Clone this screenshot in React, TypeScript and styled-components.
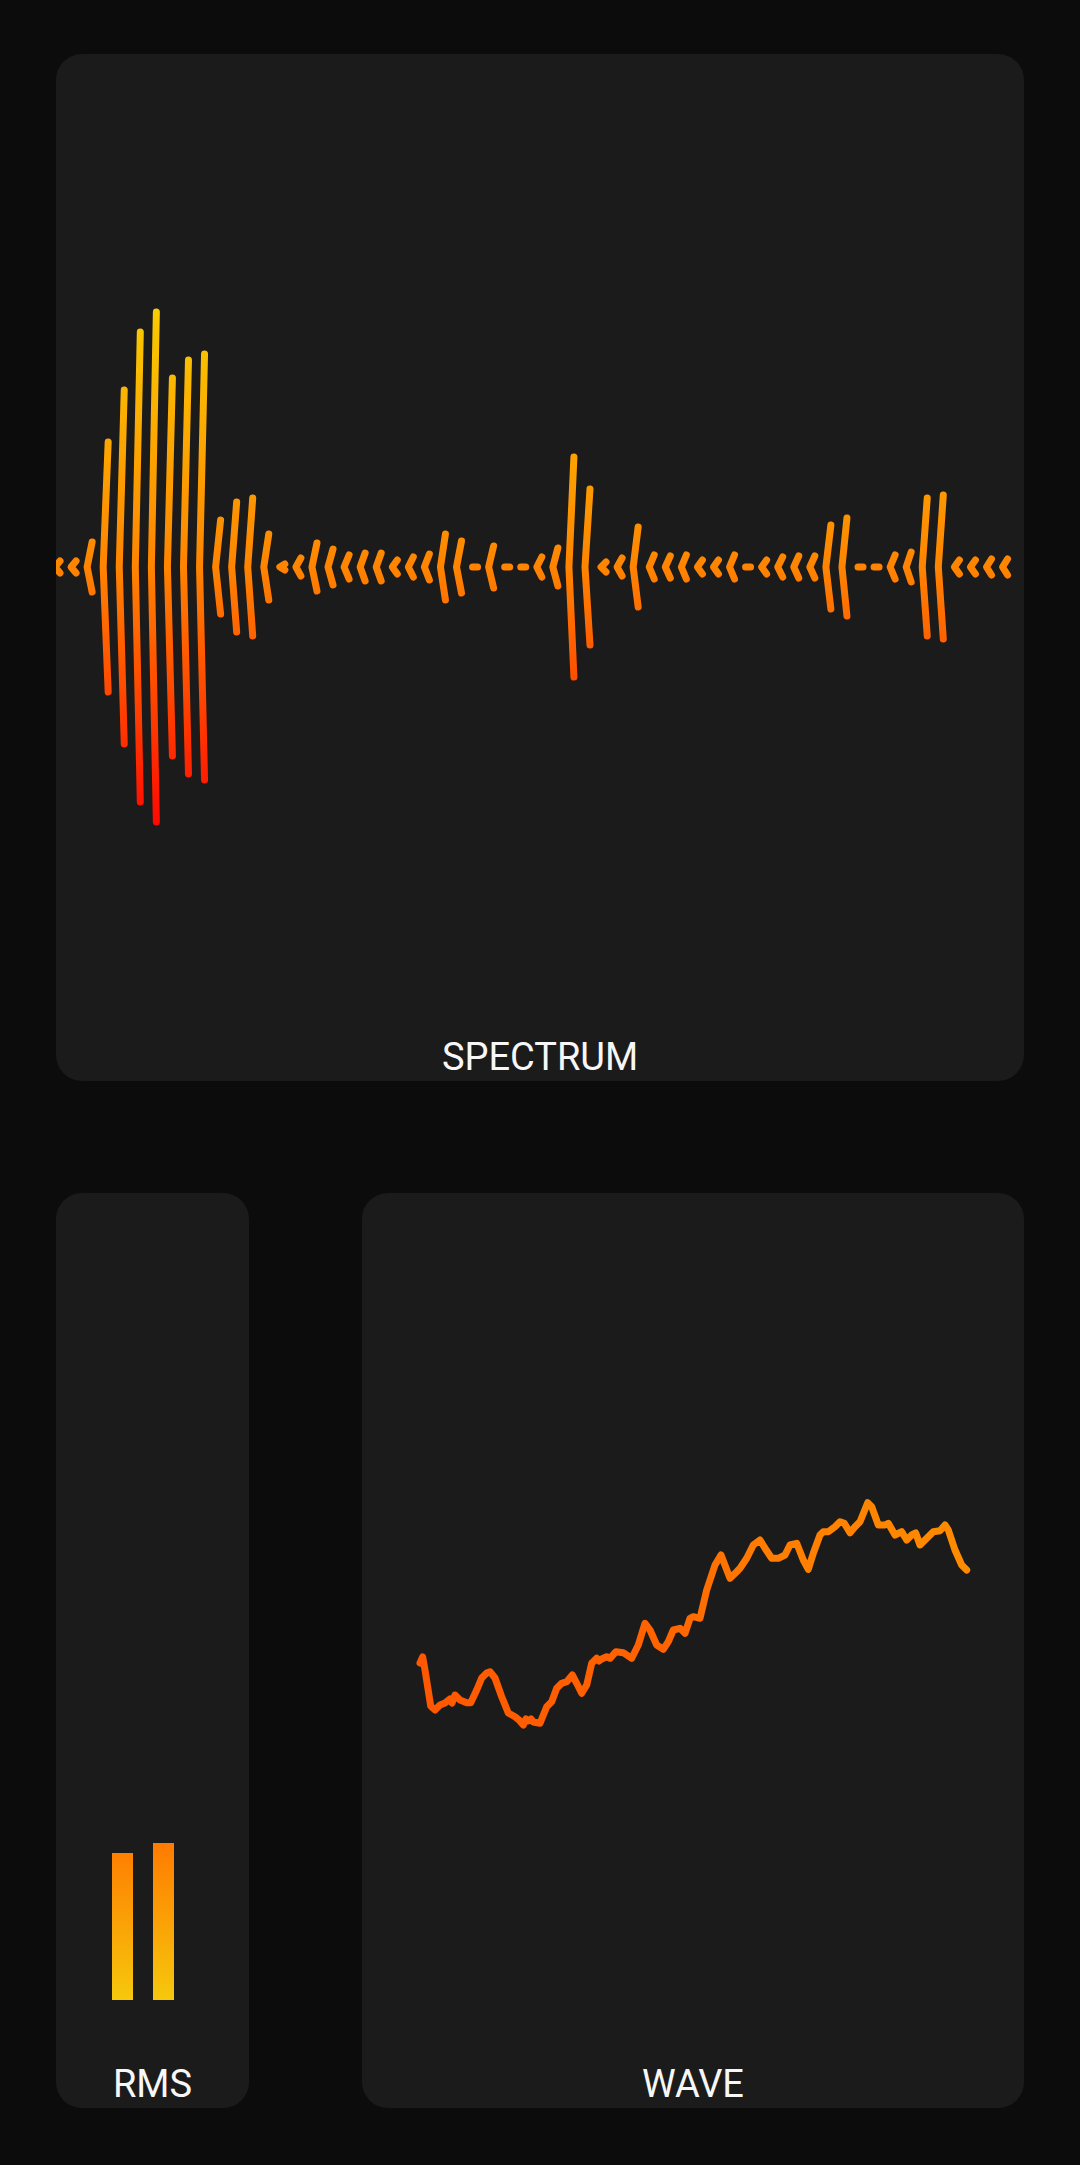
import styled, { createGlobalStyle } from "styled-components";

const GlobalStyle = createGlobalStyle`
  html, body {
    margin: 0;
    padding: 0;
    background: #0c0c0c;
  }
  body {
    font-family: "Roboto", "Liberation Sans", sans-serif;
  }
`;

const Page = styled.div`
  box-sizing: border-box;
  width: 1080px;
  height: 2165px;
  padding: 54px 56px 57px;
  display: flex;
  flex-direction: column;
  gap: 112px;
`;

const Panel = styled.section<{ $height: number }>`
  height: ${(p) => p.$height}px;
  background: #1b1b1b;
  border-radius: 26px;
  overflow: hidden;
  display: grid;
  grid-template: 1fr / 1fr;
`;

// chart and label share the one grid cell, label sits at the bottom
const Chart = styled.svg`
  grid-area: 1 / 1;
  display: block;
`;

const Label = styled.div`
  grid-area: 1 / 1;
  align-self: end;
  justify-self: center;
  padding-bottom: 2px;
  font-family: "Roboto", "Liberation Sans", sans-serif;
  font-size: 38px;
  line-height: 44px;
  color: #f7f7f7;
`;

const BottomRow = styled.div`
  display: grid;
  grid-template-columns: 193px 1fr;
  gap: 113px;
`;

const Meter = styled.div`
  grid-area: 1 / 1;
  display: flex;
  align-items: flex-end;
  gap: 20px;
  padding: 0 0 108px 56px;
`;

const MeterBar = styled.div<{ $h: number }>`
  width: 21px;
  height: ${(p) => p.$h}px;
  background: linear-gradient(to top, #f6c80c 0px, #ff7800 162px);
`;

const HEIGHTS = [
  6, 6, 25, 125, 177, 235, 255, 189, 207, 213,
  47, 65, 69, 33, 3, 9, 24, 18, 12, 14,
  14, 7, 10, 13, 33, 26, 0, 21, 0, 0,
  10, 19, 110, 78, 5, 9, 40, 12, 11, 12,
  7, 7, 12, 0, 7, 10, 11, 11, 42, 49,
  0, 0, 12, 15, 69, 72, 7, 7, 8, 8,
];

const CY = 567;

function Spectrum() {
  return (
    <Chart width={968} height={1027} viewBox="56 54 968 1027">
      <defs>
        <linearGradient id="spec" gradientUnits="userSpaceOnUse" x1="0" y1={CY - 258} x2="0" y2={CY + 258}>
          <stop offset="0" stopColor="#f8cc00" />
          <stop offset="0.5" stopColor="#ff8400" />
          <stop offset="1" stopColor="#ff0800" />
        </linearGradient>
      </defs>
      {HEIGHTS.map((h, i) => {
        const x = 60 + i * 16.06;
        return (
          <path
            key={i}
            d={`M${x} ${CY - h} L${x - 5} ${CY} L${x} ${CY + h}`}
            fill="none"
            stroke="url(#spec)"
            strokeWidth={7}
            strokeLinecap="round"
            strokeLinejoin="round"
          />
        );
      })}
    </Chart>
  );
}

const WAVE: [number, number][] = [
  [420, 1663], [422.7, 1657], [425, 1670], [430.7, 1706], [435, 1710], [440, 1705],
  [445, 1703], [450, 1699], [452, 1703], [455, 1695], [460, 1700], [466.7, 1702.7],
  [470.7, 1702.7], [476.7, 1690], [481.7, 1678], [486.7, 1673], [490, 1671.7], [495, 1678],
  [501.7, 1696.7], [508.3, 1713], [515, 1716.7], [519, 1720], [523.3, 1725], [526, 1719],
  [528.3, 1721], [531, 1719], [533.3, 1722], [540, 1723.3], [546.7, 1706.7], [551.7, 1701.7],
  [556.7, 1688.3], [561.7, 1683.3], [566.7, 1681.7], [572.3, 1675], [576.7, 1683.3],
  [581.7, 1693.3], [586.7, 1685], [591.7, 1663.3], [596.7, 1658.3], [599, 1661], [601.7, 1659],
  [606.7, 1656.7], [610, 1658.3], [616, 1651.7], [623.3, 1652.7], [631.7, 1658.3],
  [638.3, 1645], [645, 1623.3], [650, 1630], [656.7, 1645], [663.3, 1649.3], [668.3, 1641.7],
  [673.3, 1630], [680, 1628.3], [685, 1633.3], [690, 1618.3], [693.3, 1616.7], [700, 1618.3],
  [706.7, 1590], [715, 1565], [721, 1555], [730, 1578.3], [736.7, 1571.7], [740, 1568.3],
  [746.7, 1558.3], [753.3, 1545], [760, 1540], [765, 1548.3], [771.7, 1558.3], [778.3, 1558.3],
  [785, 1555], [790, 1545], [796.7, 1543.3], [803.3, 1560], [808.3, 1569.3], [813.3, 1553.3],
  [820, 1535], [823.3, 1531.7], [828.3, 1531.7], [835, 1526.7], [840, 1521.7], [844.3, 1523.3],
  [850, 1532.7], [855, 1526.7], [860, 1521.7], [867.7, 1502.7], [871.7, 1506.7], [878.3, 1525],
  [885, 1525], [888.3, 1523.3], [895, 1535], [901.7, 1531.7], [906.7, 1540], [911.7, 1535],
  [915.7, 1533], [920, 1545], [925, 1540], [933.3, 1531.7], [940, 1530.7], [945, 1525],
  [948.3, 1530], [955, 1550], [961.7, 1565], [966.7, 1570],
];

function Wave() {
  return (
    <Chart width={662} height={915} viewBox="362 1193 662 915">
      <defs>
        <linearGradient id="wave" gradientUnits="userSpaceOnUse" x1="418" y1="0" x2="968" y2="0">
          <stop offset="0" stopColor="#ff5800" />
          <stop offset="0.45" stopColor="#ff6400" />
          <stop offset="0.62" stopColor="#ff7c00" />
          <stop offset="1" stopColor="#ff8c00" />
        </linearGradient>
      </defs>
      <polyline
        points={WAVE.map(([x, y]) => `${x},${y}`).join(" ")}
        fill="none"
        stroke="url(#wave)"
        strokeWidth={7}
        strokeLinejoin="round"
        strokeLinecap="round"
      />
    </Chart>
  );
}

export default function App() {
  return (
    <>
      <GlobalStyle />
      <Page>
        <Panel $height={1027}>
          <Spectrum />
          <Label>SPECTRUM</Label>
        </Panel>
        <BottomRow>
          <Panel $height={915}>
            <Meter>
              <MeterBar $h={147} />
              <MeterBar $h={157} />
            </Meter>
            <Label>RMS</Label>
          </Panel>
          <Panel $height={915}>
            <Wave />
            <Label>WAVE</Label>
          </Panel>
        </BottomRow>
      </Page>
    </>
  );
}
